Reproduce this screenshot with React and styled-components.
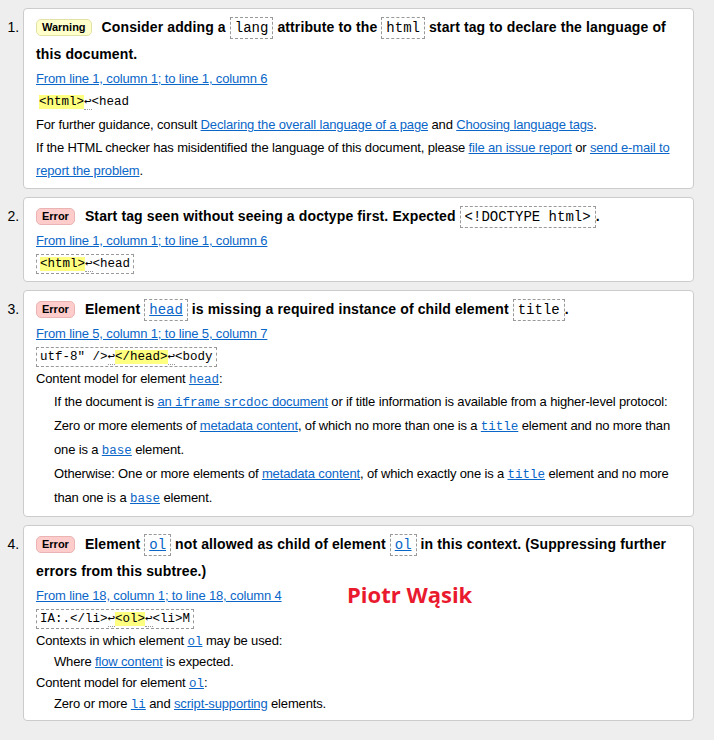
import React from 'react';
import styled, { createGlobalStyle, css } from 'styled-components';

const GlobalStyle = createGlobalStyle`
  body {
    margin: 0;
    background: #eeeeee;
    font-family: "Liberation Sans", Arial, sans-serif;
    color: #000;
  }
`;

const MessageList = styled.ol`
  margin: 8px 20px 0 23px;
  padding: 0;
  list-style: decimal outside;
  font-size: 13px;
  letter-spacing: -0.15px;
`;

const Message = styled.li`
  position: relative;
  background: #fff;
  border: 1px solid #cccccc;
  border-radius: 4px;
  padding: 5px 12px 6px;
  margin-bottom: 8px;

  &::marker {
    font-size: 14px;
    letter-spacing: 0;
  }
`;

const badgeColors = {
  warning: css`
    background: #ffffcc;
    border-color: #e2e2a6;
  `,
  error: css`
    background: #ffcccc;
    border-color: #eab4b4;
  `,
};

const Badge = styled.span`
  display: inline-block;
  vertical-align: 1px;
  padding: 0 5px;
  margin-right: 10px;
  line-height: 15px;
  font-size: 11px;
  font-weight: bold;
  letter-spacing: 0;
  border: 1px solid;
  border-radius: 5px;
  ${props => badgeColors[props.$kind]}
`;

const Title = styled.p`
  margin: 0;
  font-size: 14px;
  font-weight: bold;
  line-height: 27px;
  letter-spacing: 0.12px;
`;

const mono = css`
  font-family: "Liberation Mono", "Courier New", monospace;
  font-weight: normal;
  letter-spacing: 0;
  line-height: 1;
`;

const TitleCode = styled.code`
  ${mono}
  font-size: 14px;
  padding: 2px 4px;
  border: 1px dashed #999;
`;

const Link = styled.a`
  color: #0a66c8;
  text-decoration: underline;
  cursor: pointer;
`;

const CodeLink = styled(Link)`
  ${mono}
  font-size: ${props => (props.$large ? '14px' : '12.5px')};
`;

const Location = styled.p`
  margin: 0;
  line-height: 21px;
`;

const Extract = styled.p`
  margin: 0;
  line-height: 24px;
`;

const ExtractCode = styled.code`
  ${mono}
  font-size: 12.5px;
  padding: 2px 3px;
  ${props => props.$boxed && css`
    border: 1px dashed #999;
  `}
`;

const Mark = styled.b`
  font-weight: normal;
  background: #ffff80;
`;

const Newline = styled.b`
  font-weight: normal;
  border-bottom: 1px dotted #999;
`;

const Para = styled.p`
  margin: 0;
  line-height: 23px;
`;

const Defs = styled.dl`
  margin: 0;
`;

const Term = styled.dt`
  line-height: 22px;
`;

const Def = styled.dd`
  margin: 0 0 0 18px;
  line-height: ${props => (props.$tight ? '20px' : '24px')};
`;

const Watermark = styled.span`
  position: absolute;
  left: 323px;
  top: 57px;
  font-family: "Open Sans", sans-serif;
  font-size: 22px;
  font-weight: bold;
  line-height: 22px;
  letter-spacing: 0;
  color: #ea1a2e;
`;

const Code = ({ boxed, children }) => (
  <ExtractCode $boxed={boxed}>{children}</ExtractCode>
);

export default function App() {
  return (
    <>
      <GlobalStyle />
      <MessageList>
        <Message>
          <Title>
            <Badge $kind="warning">Warning</Badge>
            Consider adding a <TitleCode>lang</TitleCode> attribute to the{' '}
            <TitleCode>html</TitleCode> start tag to declare the language of this document.
          </Title>
          <Location>
            <Link>From line 1, column 1; to line 1, column 6</Link>
          </Location>
          <Extract>
            <Code>
              <Mark>&lt;html&gt;</Mark>
              <Newline>↩</Newline>&lt;head
            </Code>
          </Extract>
          <Para>
            For further guidance, consult <Link>Declaring the overall language of a page</Link> and{' '}
            <Link>Choosing language tags</Link>.
          </Para>
          <Para>
            If the HTML checker has misidentified the language of this document, please{' '}
            <Link>file an issue report</Link> or <Link>send e-mail to report the problem</Link>.
          </Para>
        </Message>

        <Message>
          <Title>
            <Badge $kind="error">Error</Badge>
            Start tag seen without seeing a doctype first. Expected{' '}
            <TitleCode>&lt;!DOCTYPE html&gt;</TitleCode>.
          </Title>
          <Location>
            <Link>From line 1, column 1; to line 1, column 6</Link>
          </Location>
          <Extract>
            <Code boxed>
              <Mark>&lt;html&gt;</Mark>
              <Newline>↩</Newline>&lt;head
            </Code>
          </Extract>
        </Message>

        <Message>
          <Title>
            <Badge $kind="error">Error</Badge>
            Element{' '}
            <TitleCode>
              <CodeLink $large>head</CodeLink>
            </TitleCode>{' '}
            is missing a required instance of child element <TitleCode>title</TitleCode>.
          </Title>
          <Location>
            <Link>From line 5, column 1; to line 5, column 7</Link>
          </Location>
          <Extract>
            <Code boxed>
              utf-8" /&gt;<Newline>↩</Newline>
              <Mark>&lt;/head&gt;</Mark>
              <Newline>↩</Newline>&lt;body
            </Code>
          </Extract>
          <Defs>
            <Term>
              Content model for element <CodeLink>head</CodeLink>:
            </Term>
            <Def>
              If the document is <Link>an <CodeLink as="code">iframe</CodeLink>{' '}
              <CodeLink as="code">srcdoc</CodeLink> document</Link> or if title information is
              available from a higher-level protocol:
            </Def>
            <Def>
              Zero or more elements of <Link>metadata content</Link>, of which no more than one
              is a <CodeLink>title</CodeLink> element and no more than one is a{' '}
              <CodeLink>base</CodeLink> element.
            </Def>
            <Def>
              Otherwise: One or more elements of <Link>metadata content</Link>, of which exactly
              one is a <CodeLink>title</CodeLink> element and no more than one is a{' '}
              <CodeLink>base</CodeLink> element.
            </Def>
          </Defs>
        </Message>

        <Message>
          <Title>
            <Badge $kind="error">Error</Badge>
            Element{' '}
            <TitleCode>
              <CodeLink $large>ol</CodeLink>
            </TitleCode>{' '}
            not allowed as child of element{' '}
            <TitleCode>
              <CodeLink $large>ol</CodeLink>
            </TitleCode>{' '}
            in this context. (Suppressing further errors from this subtree.)
          </Title>
          <Location>
            <Link>From line 18, column 1; to line 18, column 4</Link>
          </Location>
          <Extract>
            <Code boxed>
              IA:.&lt;/li&gt;<Newline>↩</Newline>
              <Mark>&lt;ol&gt;</Mark>
              <Newline>↩</Newline>&lt;li&gt;M
            </Code>
          </Extract>
          <Defs>
            <Term>
              Contexts in which element <CodeLink>ol</CodeLink> may be used:
            </Term>
            <Def $tight>
              Where <Link>flow content</Link> is expected.
            </Def>
            <Term>
              Content model for element <CodeLink>ol</CodeLink>:
            </Term>
            <Def $tight>
              Zero or more <CodeLink>li</CodeLink> and <Link>script-supporting</Link> elements.
            </Def>
          </Defs>
          <Watermark>Piotr Wąsik</Watermark>
        </Message>
      </MessageList>
    </>
  );
}
